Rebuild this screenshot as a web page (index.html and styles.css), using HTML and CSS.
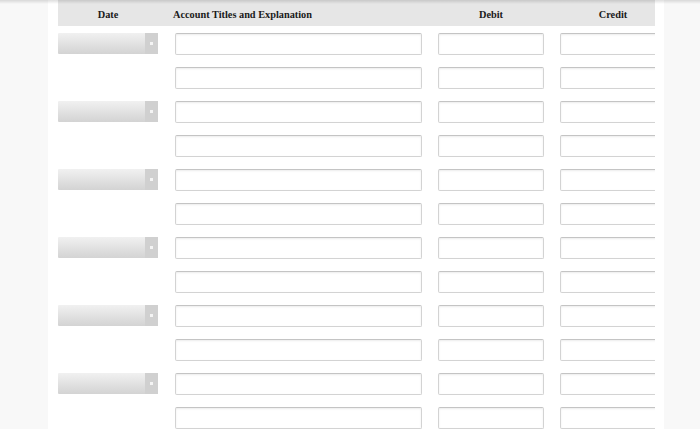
FILE: index.html
```html
<!DOCTYPE html>
<html>
<head>
<meta charset="utf-8">
<link rel="stylesheet" href="styles.css">
</head>
<body>
<div class="page">
  <div class="panel">
    <div class="table">
      <div class="head">
        <div class="h-date">Date</div>
        <div class="h-acct">Account Titles and Explanation</div>
        <div class="h-num">Debit</div>
        <div class="h-num h-credit">Credit</div>
      </div>
      <div class="rows">
        <div class="row"><div class="date"><div class="sel"><span class="arr"></span></div></div><div class="in acct"></div><div class="in num"></div><div class="in num"></div></div>
        <div class="row"><div class="date"></div><div class="in acct"></div><div class="in num"></div><div class="in num"></div></div>
        <div class="row"><div class="date"><div class="sel"><span class="arr"></span></div></div><div class="in acct"></div><div class="in num"></div><div class="in num"></div></div>
        <div class="row"><div class="date"></div><div class="in acct"></div><div class="in num"></div><div class="in num"></div></div>
        <div class="row"><div class="date"><div class="sel"><span class="arr"></span></div></div><div class="in acct"></div><div class="in num"></div><div class="in num"></div></div>
        <div class="row"><div class="date"></div><div class="in acct"></div><div class="in num"></div><div class="in num"></div></div>
        <div class="row"><div class="date"><div class="sel"><span class="arr"></span></div></div><div class="in acct"></div><div class="in num"></div><div class="in num"></div></div>
        <div class="row"><div class="date"></div><div class="in acct"></div><div class="in num"></div><div class="in num"></div></div>
        <div class="row"><div class="date"><div class="sel"><span class="arr"></span></div></div><div class="in acct"></div><div class="in num"></div><div class="in num"></div></div>
        <div class="row"><div class="date"></div><div class="in acct"></div><div class="in num"></div><div class="in num"></div></div>
        <div class="row"><div class="date"><div class="sel"><span class="arr"></span></div></div><div class="in acct"></div><div class="in num"></div><div class="in num"></div></div>
        <div class="row"><div class="date"></div><div class="in acct"></div><div class="in num"></div><div class="in num"></div></div>
      </div>
    </div>
  </div>
</div>
</body>
</html>
```
FILE: styles.css
```css
html, body {
  margin: 0;
  padding: 0;
  height: 100%;
  overflow: hidden;
}
body {
  background: #f8f8f8;
  font-family: "Liberation Serif", "Times New Roman", serif;
}
.page {
  position: relative;
  height: 429px;
  display: flex;
}
.page::before {
  content: "";
  position: absolute;
  left: 0;
  right: 0;
  top: 0;
  height: 4px;
  background: linear-gradient(rgba(0,0,0,0.13), rgba(0,0,0,0));
}
.panel {
  margin-left: 48px;
  width: 616px;
  background: #fff;
  padding-left: 10px;
  box-sizing: border-box;
  height: 429px;
}
.table {
  width: 597px;
  overflow: hidden;
}
.head {
  display: flex;
  align-items: center;
  height: 26px;
  box-sizing: border-box;
  padding-top: 2px;
  background: #e6e6e6;
  font-weight: bold;
  font-size: 10.3px;
  color: #1a1a1a;
  white-space: nowrap;
}
.h-date {
  width: 100px;
  text-align: center;
  flex: none;
}
.h-acct {
  width: 249px;
  margin-left: 15px;
  flex: none;
}
.h-num {
  width: 106px;
  margin-left: 16px;
  text-align: center;
  flex: none;
}
.rows {
  display: flex;
  flex-direction: column;
  gap: 12px;
  padding-top: 7px;
}
.row {
  display: flex;
  height: 22px;
}
.date {
  width: 100px;
  flex: none;
  margin-right: 17px;
}
.sel {
  height: 21px;
  display: flex;
  justify-content: flex-end;
  background: linear-gradient(#f1f1f1, #d3d3d3);
  border-radius: 1px;
}
.arr {
  width: 13px;
  height: 21px;
  background: #d0d0d0;
  display: flex;
  align-items: center;
  justify-content: center;
}
.arr::after {
  content: "";
  width: 3px;
  height: 3px;
  background: #f4f4f4;
}
.in {
  box-sizing: border-box;
  height: 22px;
  background: #fff;
  border: 1px solid #d3d3d3;
  border-top-color: #c4c4c4;
  box-shadow: inset 0 1px 2px rgba(0,0,0,0.08);
  border-radius: 2px;
  flex: none;
}
.acct {
  width: 247px;
}
.num {
  width: 106px;
  margin-left: 16px;
}
```
